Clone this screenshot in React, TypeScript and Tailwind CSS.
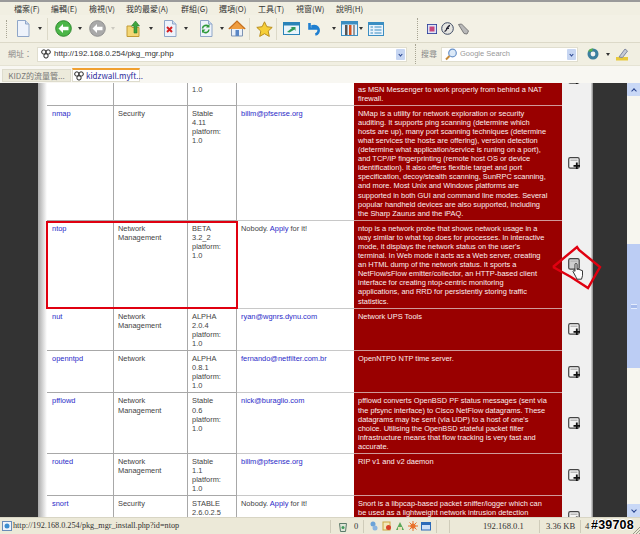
import type { ReactNode } from 'react';

const rows = [
  {
    name: '',
    cat: [],
    ver: ['1.0'],
    owner: null,
    desc: ['as MSN Messenger to work properly from behind a NAT', 'firewall.'],
    clipped: true,
  },
  {
    name: 'nmap',
    cat: ['Security'],
    ver: ['Stable', '4.11', 'platform:', '1.0'],
    owner: 'billm@pfsense.org',
    desc: [
      'NMap is a utility for network exploration or security',
      'auditing. It supports ping scanning (determine which',
      'hosts are up), many port scanning techniques (determine',
      'what services the hosts are offering), version detection',
      '(determine what application/service is runing on a port),',
      'and TCP/IP fingerprinting (remote host OS or device',
      'identification). It also offers flexible target and port',
      'specification, decoy/stealth scanning, SunRPC scanning,',
      'and more. Most Unix and Windows platforms are',
      'supported in both GUI and command line modes. Several',
      'popular handheld devices are also supported, including',
      'the Sharp Zaurus and the iPAQ.',
    ],
  },
  {
    name: 'ntop',
    cat: ['Network', 'Management'],
    ver: ['BETA', '3.2_2', 'platform:', '1.0'],
    owner: null,
    hover: true,
    desc: [
      'ntop is a network probe that shows network usage in a',
      'way similar to what top does for processes. In interactive',
      "mode, it displays the network status on the user's",
      'terminal. In Web mode it acts as a Web server, creating',
      'an HTML dump of the network status. It sports a',
      'NetFlow/sFlow emitter/collector, an HTTP-based client',
      'interface for creating ntop-centric monitoring',
      'applications, and RRD for persistently storing traffic',
      'statistics.',
    ],
  },
  {
    name: 'nut',
    cat: ['Network', 'Management'],
    ver: ['ALPHA', '2.0.4', 'platform:', '1.0'],
    owner: 'ryan@wgnrs.dynu.com',
    desc: ['Network UPS Tools'],
  },
  {
    name: 'openntpd',
    cat: ['Network'],
    ver: ['ALPHA', '0.8.1', 'platform:', '1.0'],
    owner: 'fernando@netfilter.com.br',
    desc: ['OpenNTPD NTP time server.'],
  },
  {
    name: 'pfflowd',
    cat: ['Network', 'Management'],
    ver: ['Stable', '0.6', 'platform:', '1.0'],
    owner: 'nick@buraglio.com',
    desc: [
      'pfflowd converts OpenBSD PF status messages (sent via',
      'the pfsync interface) to Cisco NetFlow datagrams. These',
      "datagrams may be sent (via UDP) to a host of one's",
      'choice. Utilising the OpenBSD stateful packet filter',
      'infrastructure means that flow tracking is very fast and',
      'accurate.',
    ],
  },
  {
    name: 'routed',
    cat: ['Network', 'Management'],
    ver: ['Stable', '1.1', 'platform:', '1.0'],
    owner: 'billm@pfsense.org',
    desc: ['RIP v1 and v2 daemon'],
  },
  {
    name: 'snort',
    cat: ['Security'],
    ver: ['STABLE', '2.6.0.2.5', 'platform:', '1.0'],
    owner: null,
    desc: [
      'Snort is a libpcap-based packet sniffer/logger which can',
      'be used as a lightweight network intrusion detection',
      'system.',
    ],
  },
];

const menus = [
  ['檔案(F)', 'w-[37px]'],
  ['編輯(E)', 'w-[38px]'],
  ['檢視(V)', 'w-[37px]'],
  ['我的最愛(A)', 'w-[55px]'],
  ['群組(G)', 'w-[38px]'],
  ['選項(O)', 'w-[39px]'],
  ['工具(T)', 'w-[38px]'],
  ['視窗(W)', 'w-[40px]'],
  ['說明(H)', 'w-[40px]'],
];

function Lines({ items }: { items: string[] }) {
  return (
    <>
      {items.map((l, i) => (
        <div key={i} className="whitespace-nowrap">
          {l}
        </div>
      ))}
    </>
  );
}

function Caret({ className = '' }: { className?: string }) {
  return <span className={`h-0 w-0 border-x-[2px] border-t-[3px] border-x-transparent border-t-[#333] ${className}`} />;
}

function Grip() {
  return <span className="mx-[3px] h-[18px] w-[2px] border-l border-dotted border-[#a8a594]" />;
}

function Paw({ size = 12 }: { size?: number }) {
  return (
    <svg width={size} height={size} viewBox="0 0 12 12" className="shrink-0">
      <circle cx="3.4" cy="3.6" r="2.6" fill="#fff" stroke="#222" strokeWidth="1.2" />
      <circle cx="8.6" cy="3.6" r="2.6" fill="#fff" stroke="#222" strokeWidth="1.2" />
      <circle cx="6" cy="8.3" r="2.6" fill="#fff" stroke="#222" strokeWidth="1.2" />
    </svg>
  );
}

function DocIcon({ children }: { children?: ReactNode }) {
  return (
    <svg width="16" height="17" viewBox="0 0 16 17">
      <path d="M2.5 .5h8l3.5 3.5v12.5h-11.500z" fill="#eef3fb" stroke="#8fa6c8" />
      <path d="M10.500 .5v3.500h3.500" fill="#cfdcf0" stroke="#8fa6c8" />
      {children}
    </svg>
  );
}

function RoundArrow({ color, edge }: { color: string; edge: string }) {
  return (
    <svg width="17" height="17" viewBox="0 0 17 17">
      <circle cx="8.500" cy="8.500" r="7.800" fill={color} stroke={edge} />
      <path d="M3.500 8.500l4.500-4.500v2.800h5.500v3.400h-5.500v2.800z" fill="#fff" />
    </svg>
  );
}

function PlusIcon({ dim }: { dim?: boolean }) {
  return (
    <svg width="13" height="13" viewBox="0 0 13 13">
      <rect x=".7" y=".7" width="10.500" height="10.500" rx="1.500" fill={dim ? '#cfcfcf' : '#f4f4f4'} stroke="#444" strokeWidth="1.200" />
      <rect x="2.500" y="2.500" width="7" height="1.500" fill="#bbb" />
      {!dim && <path d="M8.800 5.500v6.500M5.500 8.800h6.500" stroke="#111" strokeWidth="1.800" />}
    </svg>
  );
}

function Row({ r }: { r: (typeof rows)[number] }) {
  return (
    <div className="grid grid-cols-[67px_74px_49px_117px_208px_29px] text-[#444]">
      <div className="border-r border-b border-[#a8a8a8] pt-[3px] pb-[2px] pl-[5px] text-[#2a2ac8]">{r.name}</div>
      <div className="border-r border-b border-[#a8a8a8] pt-[3px] pb-[2px] pl-[4px]">
        <Lines items={r.cat} />
      </div>
      <div className="border-r border-b border-[#a8a8a8] pt-[3px] pb-[2px] pl-[4px]">
        <Lines items={r.ver} />
      </div>
      <div className="border-b border-[#c8c8c8] pt-[3px] pb-[2px] pl-[4px] whitespace-nowrap">
        {r.owner ? (
          <span className="text-[#2a2ac8]">{r.owner}</span>
        ) : r.name ? (
          <>
            Nobody. <span className="text-[#2a2ac8]">Apply</span> for it!
          </>
        ) : null}
      </div>
      <div className="border-b border-[#d09a9a] bg-[#990000] pt-[3px] pb-[2px] pl-[4px] text-[#fbeeee]">
        <Lines items={r.desc} />
      </div>
      {r.clipped ? (
        <div className="flex items-start justify-center bg-[#f0f0f0] pr-[5px]">
          <span className="-mt-[10px]">
            <PlusIcon />
          </span>
        </div>
      ) : (
        <div className="flex items-center justify-center bg-[#f0f0f0] pr-[5px]">
          <PlusIcon dim={r.hover} />
        </div>
      )}
    </div>
  );
}

export default function App() {
  return (
    <div className="relative flex h-[534px] w-[640px] flex-col overflow-hidden bg-[#ece9d8] font-['Liberation_Sans',sans-serif]">
      {/* menu */}
      <div className="flex h-[15px] items-center border-t-2 border-[#9a9a9a] bg-[#f1efe2] pl-[14px] font-['Noto_Sans_CJK_TC','Liberation_Sans',sans-serif] text-[8px] text-[#333]">
        {menus.map(([m, w]) => (
          <span key={m} className={`${w} whitespace-nowrap`}>
            {m}
          </span>
        ))}
      </div>

      {/* toolbar */}
      <div className="flex h-[28px] items-center border-b border-[#dcd9c8] bg-[#f3f1e5] pl-[3px]">
        <Grip />
        <span className="ml-[4px]">
          <DocIcon />
        </span>
        <Caret className="ml-[7px]" />
        <span className="mx-[5px] h-[22px] w-px bg-[#dcd9c8]" />
        <span className="ml-[2px]">
          <RoundArrow color="#4cb648" edge="#2f8a2f" />
        </span>
        <Caret className="ml-[6px]" />
        <span className="ml-[7px]">
          <RoundArrow color="#a9a9a9" edge="#8f8f8f" />
        </span>
        <Caret className="ml-[5px] opacity-20" />
        <svg width="17" height="17" viewBox="0 0 17 17" className="ml-[11px]">
          <path d="M1 6h4l1 1.500h7v9h-12z" fill="#f4d774" stroke="#c29a35" />
          <path d="M9.500 1l4 5h-2.500v7h-3v-7h-2.500z" fill="#3fa53f" stroke="#267a26" strokeWidth=".6" />
        </svg>
        <Caret className="ml-[6px]" />
        <span className="ml-[9px]">
          <DocIcon>
            <path d="M5 7l5 5M10 7l-5 5" stroke="#d42020" strokeWidth="2" />
          </DocIcon>
        </span>
        <Caret className="ml-[6px]" />
        <span className="ml-[10px]">
          <DocIcon>
            <path d="M4.500 8.500a3.500 3.500 0 0 1 6-2M11 9.500a3.500 3.500 0 0 1-6 2" fill="none" stroke="#2f9a3a" strokeWidth="1.600" />
            <path d="M11.500 4v3.500h-3.500M4 13v-3.500h3.500" fill="#2f9a3a" />
          </DocIcon>
        </span>
        <Caret className="ml-[6px]" />
        <svg width="18" height="17" viewBox="0 0 18 17" className="ml-[4px]">
          <path d="M3.500 8v8h11v-8" fill="#eaf0f8" stroke="#7d93b3" />
          <path d="M.8 9l8.200-8 8.200 8" fill="#ef9d3f" stroke="#c56f1e" strokeWidth="1.200" />
          <rect x="7.500" y="10" width="3.500" height="6" fill="#5a86c4" />
        </svg>
        <span className="ml-[3px] h-[22px] w-px bg-[#dcd9c8]" />
        <svg width="17" height="16" viewBox="0 0 17 16" className="ml-[6px]">
          <path d="M8.500.8l2.300 4.900 5.400.7-4 3.700 1.100 5.300-4.800-2.700-4.800 2.700 1.100-5.300-4-3.700 5.400-.7z" fill="#f6cf38" stroke="#b98d1c" />
        </svg>
        <span className="ml-[3px] h-[22px] w-px bg-[#dcd9c8]" />
        <svg width="17" height="13" viewBox="0 0 17 13" className="ml-[6px]">
          <rect x=".5" y=".5" width="16" height="12" fill="#eaf4fb" stroke="#2a83b8" />
          <rect x=".5" y=".5" width="16" height="3" fill="#2a83b8" />
          <path d="M4 10l5-4-1.500-1h5v4l-1-1.400-5 3z" fill="#2f9a5a" />
        </svg>
        <svg width="15" height="14" viewBox="0 0 15 14" className="ml-[8px]">
          <path d="M1.500 1v5.500h5.500l-2.200-2.200a4.300 4.300 0 1 1 2.500 8.200" fill="none" stroke="#1f7fd0" strokeWidth="2.600" />
        </svg>
        <Caret className="ml-[9px]" />
        <svg width="17" height="15" viewBox="0 0 17 15" className="ml-[5px]">
          <rect x=".5" y=".5" width="16" height="14" fill="#e8f2fa" stroke="#3b8ec2" />
          <rect x=".5" y=".5" width="16" height="3" fill="#3b8ec2" />
          <rect x="4" y="4" width="2.500" height="10" fill="#555" />
          <rect x="8" y="4" width="2.500" height="10" fill="#d9541e" />
          <rect x="12" y="4" width="2" height="10" fill="#999" />
        </svg>
        <Caret className="ml-[1px]" />
        <svg width="16" height="14" viewBox="0 0 16 14" className="ml-[5px]">
          <rect x=".5" y=".5" width="15" height="13" fill="#eaf3fb" stroke="#3b8ec2" />
          <rect x=".5" y=".5" width="15" height="2.500" fill="#3b8ec2" />
          <path d="M2.500 5h2.500M2.500 8h2.500M2.500 11h2.500M6.500 5h7M6.500 8h7M6.500 11h7" stroke="#3b8ec2" />
        </svg>
        <span className="ml-[33px] h-[22px] border-l border-dotted border-[#a8a594]" />
        <svg width="10" height="10" viewBox="0 0 12 12" className="ml-[9px]">
          <rect x=".5" y=".5" width="11" height="11" fill="#dfe3f5" stroke="#2b3c9a" />
          <path d="M3 9V3h6v6z" fill="#c9477c" />
        </svg>
        <svg width="13" height="13" viewBox="0 0 13 13" className="ml-[4px]">
          <circle cx="6.500" cy="6.500" r="5.800" fill="#e5e5e0" stroke="#3d4a63" />
          <path d="M3.500 9.500c2.500 0 2.500-6 5.500-6M5 6.300h3" fill="none" stroke="#223" strokeWidth="1.300" />
        </svg>
        <svg width="13" height="12" viewBox="0 0 13 12" className="ml-[3px]">
          <path d="M1.500 1.500l3-.5 7 7-1.500 3-3-.5z" fill="#b9b9b9" stroke="#7a7a7a" />
        </svg>
      </div>

      {/* address bar */}
      <div className="flex h-[23px] items-center border-b border-[#e5e3d4] bg-[#f1efe2] pl-[8px] font-['Noto_Sans_CJK_TC','Liberation_Sans',sans-serif] text-[8px] text-[#888]">
        <span className="w-[29px] whitespace-nowrap">網址：</span>
        <div className="flex h-[15px] w-[370px] items-center border border-[#e0decf] bg-white pl-[3px] font-['Liberation_Sans',sans-serif] text-[8px] text-[#333]">
          <Paw size={10} />
          <span className="ml-[3px]">http://192.168.0.254/pkg_mgr.php</span>
          <span className="mr-[1px] ml-auto flex h-[11px] w-[9px] items-center justify-center rounded-[1px] bg-[#c7d6f2]">
            <span className="size-[3px] rotate-45 border-r border-b border-[#24408c]" />
          </span>
        </div>
        <span className="ml-[8px] h-[20px] border-l border-dotted border-[#a8a594]" />
        <span className="ml-[5px] w-[20px] whitespace-nowrap">搜尋</span>
        <div className="flex h-[15px] w-[137px] items-center border border-[#e0decf] bg-white pl-[3px] font-['Liberation_Sans',sans-serif] text-[7.500px] text-[#999]">
          <svg width="13" height="13" viewBox="0 0 13 13">
            <circle cx="7.500" cy="5" r="3.800" fill="#dbe9f8" stroke="#6a93c9" strokeWidth="1.200" />
            <path d="M4.500 8l-3.500 3.500" stroke="#c58a3a" strokeWidth="2" />
          </svg>
          <span className="ml-[2px]">Google Search</span>
          <span className="mr-[1px] ml-auto flex h-[11px] w-[9px] items-center justify-center rounded-[1px] bg-[#c7d6f2]">
            <span className="size-[3px] rotate-45 border-r border-b border-[#24408c]" />
          </span>
        </div>
        <svg width="12" height="12" viewBox="0 0 12 12" className="ml-[9px]">
          <circle cx="6" cy="6" r="5.500" fill="#3c7f9e" />
          <circle cx="6" cy="6" r="2.400" fill="#f2f2f2" />
          <path d="M1 3.500a5 5 0 0 1 5-3l-1 3z" fill="#5bb04d" />
        </svg>
        <Caret className="ml-[7px]" />
        <svg width="12" height="13" viewBox="0 0 12 13" className="ml-[6px]">
          <rect x="0" y="9" width="12" height="3.500" fill="#e8c93c" />
          <path d="M3 9l6-8 2.500 2-5 6.500z" fill="#c7cbd6" stroke="#8088a0" />
        </svg>
      </div>

      {/* tabs */}
      <div className="flex h-[17px] items-end bg-[#f8f7f2] pl-[2px] font-['Noto_Sans_CJK_TC','Liberation_Sans',sans-serif] text-[8px]">
        <div className="mb-[1px] flex h-[13px] w-[69px] items-center justify-center border border-[#dedccd] bg-[#eceadb] whitespace-nowrap text-[#777]">
          KIDZ的流量管...
        </div>
        <div className="mb-[1px] ml-[1px] flex h-[14px] w-[68px] items-center border border-t-2 border-[#dedccd] border-t-[#f0a030] bg-white pl-[1px] whitespace-nowrap text-[#2b2b9a]">
          <Paw size={10} />
          <span className="ml-[2px]">kidzwall.myft...</span>
        </div>
      </div>

      {/* page */}
      <div className="flex min-h-0 flex-1 overflow-hidden">
        <div className="w-[38px] shrink-0 bg-[#333]" />
        <div className="w-[9px] shrink-0 bg-gradient-to-r from-[#aaa] to-white" />
        <div className="-mt-[1.5px] w-[544px] shrink-0 bg-white text-[7.450px] leading-[9.100px]">
          {rows.map((r, i) => (
            <Row key={i} r={r} />
          ))}
        </div>
        <div className="w-[2px] shrink-0 bg-gradient-to-r from-[#ddd] to-[#888]" />
        <div className="w-[34px] shrink-0 bg-[#333]" />
        <div className="flex w-[14px] shrink-0 flex-col bg-[#f7f6ef]">
          <div className="flex h-[13px] items-center justify-center rounded-[1px] bg-[#c9d8f6]">
            <span className="mt-[2px] size-[4px] rotate-45 border-t border-l border-[#24408c]" />
          </div>
          <div className="mt-[148px] flex h-[124px] items-center justify-center bg-[#bccdf4]">
            <span className="h-[5px] w-[6px] border-y border-[#e5ecfc] bg-[#a6bbec]" />
          </div>
          <div className="mt-auto flex h-[13px] items-center justify-center rounded-[1px] bg-[#c9d8f6]">
            <span className="mb-[2px] size-[4px] rotate-45 border-r border-b border-[#24408c]" />
          </div>
        </div>
      </div>

      {/* status bar */}
      <div className="flex h-[17px] items-center border-t border-[#d8d5c4] bg-[#ece9d8] pl-[2px] font-['Liberation_Serif',serif] text-[#333]">
        <div className="flex w-[328px] items-center">
          <svg width="10" height="10" viewBox="0 0 10 10">
            <rect x=".5" y=".5" width="9" height="9" fill="#eef3fb" stroke="#6a8cb8" />
            <circle cx="5" cy="5" r="2.500" fill="#3c8ed0" />
          </svg>
          <span className="ml-[1px] text-[8.200px] whitespace-nowrap">
            http://192.168.0.254/pkg_mgr_install.php?id=ntop
          </span>
        </div>
        <span className="h-[13px] border-l border-[#cfccba]" />
        <svg width="10" height="11" viewBox="0 0 9 11" className="ml-[7px]">
          <path d="M1 2.500h7l-1 8h-5z" fill="#dfe6d8" stroke="#5b7a6a" />
          <circle cx="4.500" cy="6.500" r="1.500" fill="#3f9a5a" />
        </svg>
        <span className="ml-[6px] w-[6px] text-[8.500px]">0</span>
        <span className="ml-[3px] h-[13px] border-l border-[#cfccba]" />
        <svg width="10" height="10" viewBox="0 0 10 10" className="ml-[5px]">
          <circle cx="4" cy="3" r="2.500" fill="#6aa2d8" />
          <circle cx="6" cy="7" r="2.500" fill="#8ab4e0" />
        </svg>
        <svg width="10" height="10" viewBox="0 0 10 10" className="ml-[3px]">
          <rect x="1" y="1" width="7" height="8" fill="#f3e7b8" stroke="#c9a640" />
          <circle cx="6.500" cy="6.500" r="2.500" fill="#d8402a" />
        </svg>
        <svg width="10" height="10" viewBox="0 0 10 10" className="ml-[3px]">
          <path d="M1 9l4-8 4 8z" fill="#5aa85a" />
          <rect x="3" y="6" width="4" height="3" fill="#e6e0b8" />
        </svg>
        <svg width="10" height="10" viewBox="0 0 10 10" className="ml-[3px]">
          <circle cx="5" cy="5" r="2.600" fill="#e8702a" />
          <path d="M5 0v10M0 5h10M1.500 1.500l7 7M8.500 1.500l-7 7" stroke="#e8702a" />
        </svg>
        <svg width="10" height="10" viewBox="0 0 10 10" className="ml-[3px]">
          <rect x=".5" y="1.500" width="9" height="7.500" fill="#cfe0f5" stroke="#2d6bb8" />
          <rect x=".5" y="1.500" width="9" height="2.500" fill="#2d6bb8" />
        </svg>
        <span className="ml-[5px] h-[13px] border-l border-[#cfccba]" />
        <span className="ml-[12px] h-[13px] border-l border-[#cfccba]" />
        <span className="ml-[33px] w-[40px] text-[8.600px] whitespace-nowrap">192.168.0.1</span>
        <span className="ml-[16px] h-[13px] border-l border-[#cfccba]" />
        <span className="ml-[6px] w-[28px] text-[8.600px] whitespace-nowrap">3.36 KB</span>
        <span className="ml-[6px] h-[13px] border-l border-[#cfccba]" />
        <span className="ml-[4px] text-[8.600px]">4</span>
      </div>

      {/* red annotations drawn over the screenshot */}
      <div className="absolute top-[221px] left-[46px] h-[88px] w-[192px] border-2 border-[#e00010]" />
      <svg width="60" height="50" viewBox="0 0 60 50" className="absolute top-[244px] left-[550px]">
        <path d="M3 23L27 3l2 3 21 17-12 21-17-11-18-10" fill="none" stroke="#e00010" strokeWidth="2.400" />
      </svg>
      <svg width="13" height="17" viewBox="0 0 13 17" className="absolute top-[263px] left-[572px]">
        <path d="M3 1.500a1 1 0 0 1 2 0v5l1-.5 1 .5 1 .2 1 .5 1.500.5v5l-1 3.500H5l-1.500-3L1 8.500c0-1 1-1.200 2-.2z" fill="#fff" stroke="#222" strokeWidth=".9" />
      </svg>
      <div className="absolute top-[518px] left-[591px] font-['Liberation_Sans',sans-serif] text-[12.500px] leading-[15px] font-bold tracking-[.2px] text-black [text-shadow:1px_0_#fff,-1px_0_#fff,0_1px_#fff,0_-1px_#fff]">
        #39708
      </div>
      <svg width="8" height="8" viewBox="0 0 8 8" className="absolute right-0 bottom-0">
        <path d="M8 1L1 8M8 4L4 8M8 7L7 8" stroke="#9a9a8a" />
      </svg>
    </div>
  );
}
